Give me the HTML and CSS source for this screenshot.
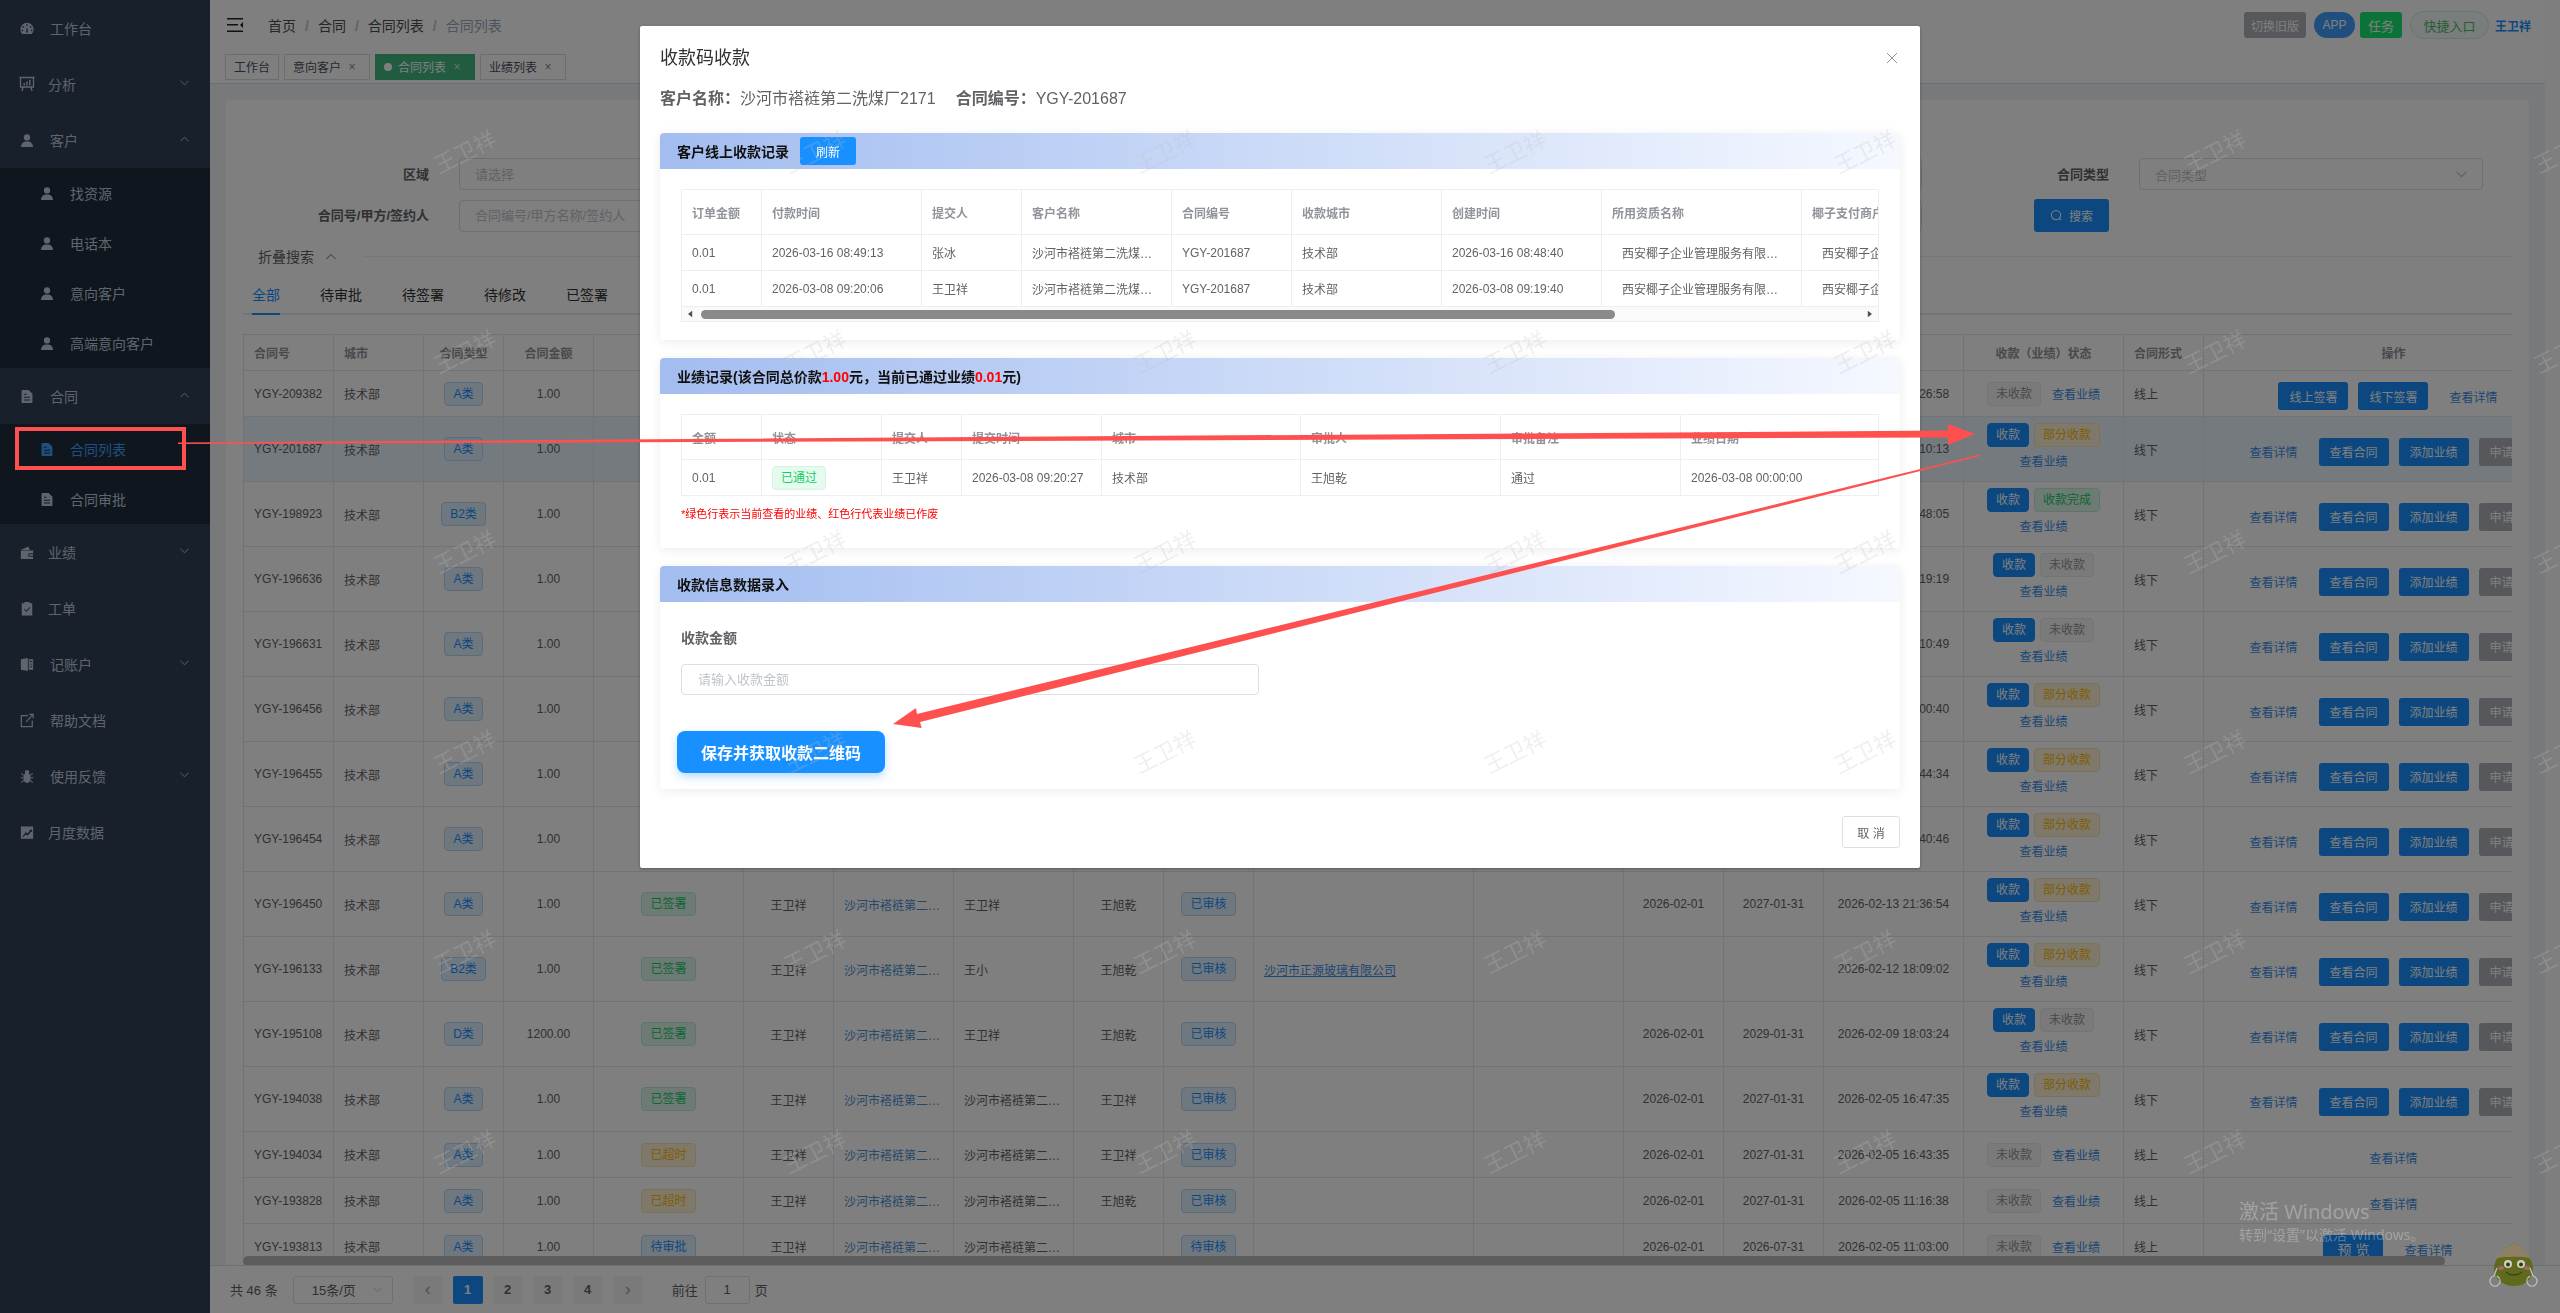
FILE: index.html
```html
<!DOCTYPE html>
<html lang="zh-CN">
<head>
    <meta charset="UTF-8">
    <meta name="viewport" content="width=device-width, initial-scale=1.0">
    <title>合同列表</title>
    <link rel="stylesheet" href="styles.css">
</head>
<body>
    <svg class="icon-defs" aria-hidden="true">
        <symbol id="i-gauge" viewBox="0 0 16 16"><path fill-rule="evenodd" d="M8 1.500a7.500 7.500 0 0 0-7.500 7.500c0 2 .8 3.900 2.100 5.200h10.800A7.400 7.400 0 0 0 15.500 9 7.500 7.500 0 0 0 8 1.500zM8 3.200a1 1 0 1 1 0 2 1 1 0 0 1 0-2zM3.800 5a1 1 0 1 1 0 2 1 1 0 0 1 0-2zM12.200 5a1 1 0 1 1 0 2 1 1 0 0 1 0-2zM2.700 9a1 1 0 1 1 0 2 1 1 0 0 1 0-2zM13.300 9a1 1 0 1 1 0 2 1 1 0 0 1 0-2zM7 12.500l.5-5h1l.5 5z"/></symbol>
        <symbol id="i-board" viewBox="0 0 16 16"><path fill="none" stroke="currentColor" stroke-width="1.300" d="M.5 1.500h15M1.500 1.500v9.500h13V1.500M4 11l-1 4M12 11l1 4"/><path d="M4.500 7h1.400v2.500H4.500zM7.300 5.500h1.400v4H7.300zM10.100 3.800h1.400v5.700h-1.400z"/></symbol>
        <symbol id="i-user" viewBox="0 0 16 16"><circle cx="8" cy="4.500" r="3.600"/><path d="M1.200 15.500c0-4.200 2.400-6.500 6.800-6.500s6.800 2.300 6.800 6.500z"/></symbol>
        <symbol id="i-doc" viewBox="0 0 16 16"><path fill-rule="evenodd" d="M2.800.5h7l4.400 4.400v9.600c0 .6-.4 1-1 1H2.800c-.6 0-1-.4-1-1V1.500c0-.6.4-1 1-1zM4.500 4.800v1.200h3V4.800zM4.500 8.200v1.200h7V8.200zM4.500 11.300v1.200h7v-1.200z"/></symbol>
        <symbol id="i-wallet" viewBox="0 0 16 16"><path fill-rule="evenodd" d="M1 5l8.500-4 1.700 4zM1 5.800h14v3h-4a2 2 0 0 0 0 4h4v2.700H1zM11 10h4v1.800h-4a.9.9 0 0 1 0-1.800z"/></symbol>
        <symbol id="i-clip" viewBox="0 0 16 16"><path fill-rule="evenodd" d="M2 2h3V.5h6V2h3v14H2zM4.500 9l3 3 4.200-5-.8-.7-3.500 4.200-2.200-2.200z"/></symbol>
        <symbol id="i-book" viewBox="0 0 16 16"><path fill-rule="evenodd" d="M1 2l8-1.500v15L1 14zM10 2h5v12h-5zM11 4v1h3V4zM11 7v1h3V7zM11 10v1h3v-1z"/></symbol>
        <symbol id="i-link" viewBox="0 0 16 16"><path fill="none" stroke="currentColor" stroke-width="1.400" d="M9 2.500H1.500v12.500h12.500V8M7 9.500L14.500 1.500M10.500 1h4.500v4.500"/></symbol>
        <symbol id="i-bug" viewBox="0 0 16 16"><ellipse cx="8" cy="9.500" rx="4.200" ry="5.800"/><circle cx="8" cy="3" r="2.400"/><path fill="none" stroke="currentColor" stroke-width="1.200" d="M1.500 4.500l2.700 2.200M14.500 4.500l-2.700 2.200M.7 9.500h3M15.300 9.500h-3M1.500 15l2.700-2.600M14.500 15l-2.700-2.600"/></symbol>
        <symbol id="i-chart" viewBox="0 0 16 16"><path fill-rule="evenodd" d="M1 1h14v14H1zM3 12.300l.8.7 3-3 2 1.800 4-5 1 .8V4.500l-3.400.6.900.6-2.700 3.400-2-1.800z"/></symbol>
        <symbol id="i-down" viewBox="0 0 10 6"><path fill="none" stroke="currentColor" stroke-width="1" d="M.5.500L5 5l4.500-4.500"/></symbol>
        <symbol id="i-up" viewBox="0 0 10 6"><path fill="none" stroke="currentColor" stroke-width="1" d="M.5 5.500L5 1l4.500 4.500"/></symbol>
    </svg>

    <div class="app">
        <aside class="sidebar">
            <a class="menu-item"><svg class="menu-icon"><use href="#i-gauge"/></svg><span class="menu-text">工作台</span></a>
            <a class="menu-item"><svg class="menu-icon menu-icon-wide"><use href="#i-board"/></svg><span class="menu-text menu-text-near">分析</span><svg class="menu-arrow"><use href="#i-down"/></svg></a>
            <a class="menu-item"><svg class="menu-icon"><use href="#i-user"/></svg><span class="menu-text">客户</span><svg class="menu-arrow"><use href="#i-up"/></svg></a>
            <div class="submenu">
                <a class="sub-item"><svg class="menu-icon"><use href="#i-user"/></svg><span class="menu-text">找资源</span></a>
                <a class="sub-item"><svg class="menu-icon"><use href="#i-user"/></svg><span class="menu-text">电话本</span></a>
                <a class="sub-item"><svg class="menu-icon"><use href="#i-user"/></svg><span class="menu-text">意向客户</span></a>
                <a class="sub-item"><svg class="menu-icon"><use href="#i-user"/></svg><span class="menu-text">高端意向客户</span></a>
            </div>
            <a class="menu-item"><svg class="menu-icon"><use href="#i-doc"/></svg><span class="menu-text">合同</span><svg class="menu-arrow"><use href="#i-up"/></svg></a>
            <div class="submenu">
                <a class="sub-item sub-item-active"><svg class="menu-icon"><use href="#i-doc"/></svg><span class="menu-text">合同列表</span></a>
                <a class="sub-item"><svg class="menu-icon"><use href="#i-doc"/></svg><span class="menu-text">合同审批</span></a>
            </div>
            <a class="menu-item"><svg class="menu-icon"><use href="#i-wallet"/></svg><span class="menu-text menu-text-near">业绩</span><svg class="menu-arrow"><use href="#i-down"/></svg></a>
            <a class="menu-item"><svg class="menu-icon"><use href="#i-clip"/></svg><span class="menu-text menu-text-near">工单</span></a>
            <a class="menu-item"><svg class="menu-icon"><use href="#i-book"/></svg><span class="menu-text">记账户</span><svg class="menu-arrow"><use href="#i-down"/></svg></a>
            <a class="menu-item"><svg class="menu-icon"><use href="#i-link"/></svg><span class="menu-text">帮助文档</span></a>
            <a class="menu-item"><svg class="menu-icon"><use href="#i-bug"/></svg><span class="menu-text">使用反馈</span><svg class="menu-arrow"><use href="#i-down"/></svg></a>
            <a class="menu-item"><svg class="menu-icon"><use href="#i-chart"/></svg><span class="menu-text menu-text-near">月度数据</span></a>
        </aside>

        <div class="main">
            <div class="main-top">
                <div class="main-body">
                    <header class="navbar">
                        <svg class="hamburger" viewBox="0 0 16 14"><path d="M0 0h16v1.500H0zM0 6h11v1.500H0zM0 12.500h16V14H0zM16 4v6l-3-3z"/></svg>
                        <nav class="breadcrumb">
                            <span>首页</span><i>/</i><span>合同</span><i>/</i><span>合同列表</span><i>/</i><span class="crumb-last">合同列表</span>
                        </nav>
                        <div class="nav-right">
                            <span class="nav-btn nav-btn-gray">切换旧版</span>
                            <span class="nav-btn nav-btn-app">APP</span>
                            <span class="nav-btn nav-btn-task">任务</span>
                            <span class="nav-btn nav-btn-quick">快捷入口</span>
                            <span class="nav-user">王卫祥</span>
                        </div>
                    </header>

                    <div class="tagsbar">
                        <span class="view-tag">工作台</span>
                        <span class="view-tag">意向客户<b>×</b></span>
                        <span class="view-tag view-tag-active"><em></em>合同列表<b>×</b></span>
                        <span class="view-tag">业绩列表<b>×</b></span>
                    </div>

                    <div class="content">
                        <section class="card">
                            <form class="search-form">
                                <label>区域</label>
                                <input class="field" placeholder="请选择">
                                <label>合同类型</label>
                                <div class="field field-select"><span>合同类型</span><svg class="select-arrow"><use href="#i-down"/></svg></div>
                                <label>合同号/甲方/签约人</label>
                                <input class="field" placeholder="合同编号/甲方名称/签约人">
                                <button type="button" class="search-btn"><svg viewBox="0 0 14 14"><circle cx="6.500" cy="6.500" r="5" fill="none" stroke="currentColor" stroke-width="1.100"/><path d="M10 10l2 2" stroke="currentColor" stroke-width="1.100"/></svg>搜索</button>
                            </form>

                            <div class="fold-row">
                                <span>折叠搜索</span><svg class="fold-arrow"><use href="#i-up"/></svg><hr>
                            </div>

                            <div class="tabs">
                                <span class="tab tab-active">全部</span>
                                <span class="tab">待审批</span>
                                <span class="tab">待签署</span>
                                <span class="tab">待修改</span>
                                <span class="tab">已签署</span>
                            </div>

                            <div class="table-wrap">
                                <table class="list-table">
                                    <colgroup>
                                        <col class="w90"><col class="w90"><col class="w80"><col class="w90"><col class="w150"><col class="w90"><col class="w120"><col class="w120"><col class="w90"><col class="w90"><col class="w220"><col class="w150"><col class="w100"><col class="w100"><col class="w140"><col class="w160"><col class="w80"><col class="w380">
                                    </colgroup>
                                    <thead>
                                        <!-- 中间几列的表头被弹窗盖住 -->
                                        <tr>
                                            <th>合同号</th><th>城市</th><th class="c">合同类型</th><th class="c">合同金额</th><th></th><th></th><th></th><th></th><th></th><th></th><th></th><th></th><th></th><th></th><th></th><th class="c">收款（业绩）状态</th><th>合同形式</th><th class="c">操作</th>
                                        </tr>
                                    </thead>
                                    <tbody>
                                        <tr class="row-low">
                                            <td>YGY-209382</td><td>技术部</td><td class="c"><span class="tag tag-blue">A类</span></td><td class="c">1.00</td><td></td><td></td><td></td><td></td><td></td><td></td><td></td><td></td><td></td><td></td><td class="c">2026-03-16 10:26:58</td>
                                            <td class="c"><div class="pay-line"><span class="tag tag-gray">未收款</span><a class="link">查看业绩</a></div></td><td>线上</td>
                                            <td class="cell-ops"><div class="ops"><button class="btn">线上签署</button><button class="btn">线下签署</button><a class="link">查看详情</a></div></td>
                                        </tr>
                                        <tr class="row-tall row-current">
                                            <td>YGY-201687</td><td>技术部</td><td class="c"><span class="tag tag-blue">A类</span></td><td class="c">1.00</td><td></td><td></td><td></td><td></td><td></td><td></td><td></td><td></td><td></td><td></td><td class="c">2026-03-08 09:10:13</td>
                                            <td class="c"><div class="pay-stack"><div class="pay-tags"><span class="tag tag-fill">收款</span><span class="tag tag-amber">部分收款</span></div><a class="link">查看业绩</a></div></td><td>线下</td>
                                            <td class="cell-ops"><div class="ops"><a class="link">查看详情</a><button class="btn">查看合同</button><button class="btn">添加业绩</button><button class="btn btn-gray">申请开票</button></div></td>
                                        </tr>
                                        <tr class="row-tall">
                                            <td>YGY-198923</td><td>技术部</td><td class="c"><span class="tag tag-blue">B2类</span></td><td class="c">1.00</td><td></td><td></td><td></td><td></td><td></td><td></td><td></td><td></td><td></td><td></td><td class="c">2026-03-02 16:48:05</td>
                                            <td class="c"><div class="pay-stack"><div class="pay-tags"><span class="tag tag-fill">收款</span><span class="tag tag-green">收款完成</span></div><a class="link">查看业绩</a></div></td><td>线下</td>
                                            <td class="cell-ops"><div class="ops"><a class="link">查看详情</a><button class="btn">查看合同</button><button class="btn">添加业绩</button><button class="btn btn-gray">申请开票</button></div></td>
                                        </tr>
                                        <tr class="row-tall">
                                            <td>YGY-196636</td><td>技术部</td><td class="c"><span class="tag tag-blue">A类</span></td><td class="c">1.00</td><td></td><td></td><td></td><td></td><td></td><td></td><td></td><td></td><td></td><td></td><td class="c">2026-02-14 09:19:19</td>
                                            <td class="c"><div class="pay-stack"><div class="pay-tags"><span class="tag tag-fill">收款</span><span class="tag tag-gray">未收款</span></div><a class="link">查看业绩</a></div></td><td>线下</td>
                                            <td class="cell-ops"><div class="ops"><a class="link">查看详情</a><button class="btn">查看合同</button><button class="btn">添加业绩</button><button class="btn btn-gray">申请开票</button></div></td>
                                        </tr>
                                        <tr class="row-tall">
                                            <td>YGY-196631</td><td>技术部</td><td class="c"><span class="tag tag-blue">A类</span></td><td class="c">1.00</td><td></td><td></td><td></td><td></td><td></td><td></td><td></td><td></td><td></td><td></td><td class="c">2026-02-14 09:10:49</td>
                                            <td class="c"><div class="pay-stack"><div class="pay-tags"><span class="tag tag-fill">收款</span><span class="tag tag-gray">未收款</span></div><a class="link">查看业绩</a></div></td><td>线下</td>
                                            <td class="cell-ops"><div class="ops"><a class="link">查看详情</a><button class="btn">查看合同</button><button class="btn">添加业绩</button><button class="btn btn-gray">申请开票</button></div></td>
                                        </tr>
                                        <tr class="row-tall">
                                            <td>YGY-196456</td><td>技术部</td><td class="c"><span class="tag tag-blue">A类</span></td><td class="c">1.00</td><td></td><td></td><td></td><td></td><td></td><td></td><td></td><td></td><td></td><td></td><td class="c">2026-02-13 22:00:40</td>
                                            <td class="c"><div class="pay-stack"><div class="pay-tags"><span class="tag tag-fill">收款</span><span class="tag tag-amber">部分收款</span></div><a class="link">查看业绩</a></div></td><td>线下</td>
                                            <td class="cell-ops"><div class="ops"><a class="link">查看详情</a><button class="btn">查看合同</button><button class="btn">添加业绩</button><button class="btn btn-gray">申请开票</button></div></td>
                                        </tr>
                                        <tr class="row-tall">
                                            <td>YGY-196455</td><td>技术部</td><td class="c"><span class="tag tag-blue">A类</span></td><td class="c">1.00</td><td></td><td></td><td></td><td></td><td></td><td></td><td></td><td></td><td></td><td></td><td class="c">2026-02-13 21:44:34</td>
                                            <td class="c"><div class="pay-stack"><div class="pay-tags"><span class="tag tag-fill">收款</span><span class="tag tag-amber">部分收款</span></div><a class="link">查看业绩</a></div></td><td>线下</td>
                                            <td class="cell-ops"><div class="ops"><a class="link">查看详情</a><button class="btn">查看合同</button><button class="btn">添加业绩</button><button class="btn btn-gray">申请开票</button></div></td>
                                        </tr>
                                        <tr class="row-tall">
                                            <td>YGY-196454</td><td>技术部</td><td class="c"><span class="tag tag-blue">A类</span></td><td class="c">1.00</td><td></td><td></td><td></td><td></td><td></td><td></td><td></td><td></td><td></td><td></td><td class="c">2026-02-13 21:40:46</td>
                                            <td class="c"><div class="pay-stack"><div class="pay-tags"><span class="tag tag-fill">收款</span><span class="tag tag-amber">部分收款</span></div><a class="link">查看业绩</a></div></td><td>线下</td>
                                            <td class="cell-ops"><div class="ops"><a class="link">查看详情</a><button class="btn">查看合同</button><button class="btn">添加业绩</button><button class="btn btn-gray">申请开票</button></div></td>
                                        </tr>
                                        <tr class="row-tall">
                                            <td>YGY-196450</td><td>技术部</td><td class="c"><span class="tag tag-blue">A类</span></td><td class="c">1.00</td><td class="c"><span class="tag tag-green">已签署</span></td><td class="c">王卫祥</td><td class="cut link-name">沙河市褡裢第二洗煤厂</td><td class="cut">王卫祥</td><td class="c">王旭乾</td><td class="c"><span class="tag tag-blue">已审核</span></td><td></td><td></td><td class="c">2026-02-01</td><td class="c">2027-01-31</td><td class="c">2026-02-13 21:36:54</td>
                                            <td class="c"><div class="pay-stack"><div class="pay-tags"><span class="tag tag-fill">收款</span><span class="tag tag-amber">部分收款</span></div><a class="link">查看业绩</a></div></td><td>线下</td>
                                            <td class="cell-ops"><div class="ops"><a class="link">查看详情</a><button class="btn">查看合同</button><button class="btn">添加业绩</button><button class="btn btn-gray">申请开票</button></div></td>
                                        </tr>
                                        <tr class="row-tall">
                                            <td>YGY-196133</td><td>技术部</td><td class="c"><span class="tag tag-blue">B2类</span></td><td class="c">1.00</td><td class="c"><span class="tag tag-green">已签署</span></td><td class="c">王卫祥</td><td class="cut link-name">沙河市褡裢第二洗煤厂</td><td class="cut">王小</td><td class="c">王旭乾</td><td class="c"><span class="tag tag-blue">已审核</span></td><td><a class="link link-under">沙河市正源玻璃有限公司</a></td><td></td><td class="c"></td><td class="c"></td><td class="c">2026-02-12 18:09:02</td>
                                            <td class="c"><div class="pay-stack"><div class="pay-tags"><span class="tag tag-fill">收款</span><span class="tag tag-amber">部分收款</span></div><a class="link">查看业绩</a></div></td><td>线下</td>
                                            <td class="cell-ops"><div class="ops"><a class="link">查看详情</a><button class="btn">查看合同</button><button class="btn">添加业绩</button><button class="btn btn-gray">申请开票</button></div></td>
                                        </tr>
                                        <tr class="row-tall">
                                            <td>YGY-195108</td><td>技术部</td><td class="c"><span class="tag tag-blue">D类</span></td><td class="c">1200.00</td><td class="c"><span class="tag tag-green">已签署</span></td><td class="c">王卫祥</td><td class="cut link-name">沙河市褡裢第二洗煤厂</td><td class="cut">王卫祥</td><td class="c">王旭乾</td><td class="c"><span class="tag tag-blue">已审核</span></td><td></td><td></td><td class="c">2026-02-01</td><td class="c">2029-01-31</td><td class="c">2026-02-09 18:03:24</td>
                                            <td class="c"><div class="pay-stack"><div class="pay-tags"><span class="tag tag-fill">收款</span><span class="tag tag-gray">未收款</span></div><a class="link">查看业绩</a></div></td><td>线下</td>
                                            <td class="cell-ops"><div class="ops"><a class="link">查看详情</a><button class="btn">查看合同</button><button class="btn">添加业绩</button><button class="btn btn-gray">申请开票</button></div></td>
                                        </tr>
                                        <tr class="row-tall">
                                            <td>YGY-194038</td><td>技术部</td><td class="c"><span class="tag tag-blue">A类</span></td><td class="c">1.00</td><td class="c"><span class="tag tag-green">已签署</span></td><td class="c">王卫祥</td><td class="cut link-name">沙河市褡裢第二洗煤厂</td><td class="cut">沙河市褡裢第二洗煤厂</td><td class="c">王卫祥</td><td class="c"><span class="tag tag-blue">已审核</span></td><td></td><td></td><td class="c">2026-02-01</td><td class="c">2027-01-31</td><td class="c">2026-02-05 16:47:35</td>
                                            <td class="c"><div class="pay-stack"><div class="pay-tags"><span class="tag tag-fill">收款</span><span class="tag tag-amber">部分收款</span></div><a class="link">查看业绩</a></div></td><td>线下</td>
                                            <td class="cell-ops"><div class="ops"><a class="link">查看详情</a><button class="btn">查看合同</button><button class="btn">添加业绩</button><button class="btn btn-gray">申请开票</button></div></td>
                                        </tr>
                                        <tr class="row-low">
                                            <td>YGY-194034</td><td>技术部</td><td class="c"><span class="tag tag-blue">A类</span></td><td class="c">1.00</td><td class="c"><span class="tag tag-amber">已超时</span></td><td class="c">王卫祥</td><td class="cut link-name">沙河市褡裢第二洗煤厂</td><td class="cut">沙河市褡裢第二洗煤厂</td><td class="c">王卫祥</td><td class="c"><span class="tag tag-blue">已审核</span></td><td></td><td></td><td class="c">2026-02-01</td><td class="c">2027-01-31</td><td class="c">2026-02-05 16:43:35</td>
                                            <td class="c"><div class="pay-line"><span class="tag tag-gray">未收款</span><a class="link">查看业绩</a></div></td><td>线上</td>
                                            <td class="cell-ops"><div class="ops"><a class="link">查看详情</a></div></td>
                                        </tr>
                                        <tr class="row-low">
                                            <td>YGY-193828</td><td>技术部</td><td class="c"><span class="tag tag-blue">A类</span></td><td class="c">1.00</td><td class="c"><span class="tag tag-amber">已超时</span></td><td class="c">王卫祥</td><td class="cut link-name">沙河市褡裢第二洗煤厂</td><td class="cut">沙河市褡裢第二洗煤厂</td><td class="c">王旭乾</td><td class="c"><span class="tag tag-blue">已审核</span></td><td></td><td></td><td class="c">2026-02-01</td><td class="c">2027-01-31</td><td class="c">2026-02-05 11:16:38</td>
                                            <td class="c"><div class="pay-line"><span class="tag tag-gray">未收款</span><a class="link">查看业绩</a></div></td><td>线上</td>
                                            <td class="cell-ops"><div class="ops"><a class="link">查看详情</a></div></td>
                                        </tr>
                                        <tr class="row-low">
                                            <td>YGY-193813</td><td>技术部</td><td class="c"><span class="tag tag-blue">A类</span></td><td class="c">1.00</td><td class="c"><span class="tag tag-blue">待审批</span></td><td class="c">王卫祥</td><td class="cut link-name">沙河市褡裢第二洗煤厂</td><td class="cut">沙河市褡裢第二洗煤厂</td><td class="c"></td><td class="c"><span class="tag tag-blue">待审核</span></td><td></td><td></td><td class="c">2026-02-01</td><td class="c">2026-07-31</td><td class="c">2026-02-05 11:03:00</td>
                                            <td class="c"><div class="pay-line"><span class="tag tag-gray">未收款</span><a class="link">查看业绩</a></div></td><td>线上</td>
                                            <td class="cell-ops"><div class="ops"><button class="btn btn-preview">预 览</button><a class="link">查看详情</a></div></td>
                                        </tr>
                                    </tbody>
                                </table>
                                <div class="table-thumb"></div>
                            </div>
                        </section>
                    </div>
                </div>
                <div class="page-track"></div>
            </div>

            <footer class="pager">
                <span class="pager-total">共 46 条</span>
                <div class="pager-size"><span>15条/页</span><svg><use href="#i-down"/></svg></div>
                <span class="page-btn page-arrow">‹</span>
                <span class="page-btn page-now">1</span>
                <span class="page-btn">2</span>
                <span class="page-btn">3</span>
                <span class="page-btn">4</span>
                <span class="page-btn page-arrow">›</span>
                <span class="pager-jump">前往</span>
                <span class="pager-input">1</span>
                <span>页</span>
            </footer>
        </div>
    </div>

    <div class="mask"></div>

    <svg class="mascot" viewBox="0 0 70 60">
        <path fill="#5f6a1c" d="M34 8C25 12 14 24 14 33c0 11 9 18 20 18s19-7 19-18c0-9-11-21-19-25z"/>
        <path fill="#8f8065" d="M34 8c-8 4-15 11-18.500 16 6-3 13-1.500 18-2.500 5 1 12-.5 18 2.500C47 18 42 12 34 8z"/>
        <circle cx="28" cy="29" r="4" fill="#cfcfc4"/><circle cx="41" cy="29" r="4" fill="#cfcfc4"/>
        <circle cx="28" cy="29.500" r="2" fill="#33361a"/><circle cx="41" cy="29.500" r="2" fill="#33361a"/>
        <ellipse cx="21" cy="33" rx="3" ry="2" fill="#a0656a"/><ellipse cx="47" cy="33" rx="3" ry="2" fill="#a0656a"/>
        <path fill="none" stroke="#2e3312" stroke-width="1" d="M26 37c4 4 11 4 16 0"/>
        <path fill="none" stroke="#c4c4c0" stroke-width="1.200" d="M17 33l-3 8c-4 1-5 5-3 8s6 3 8 0 1-6-2-8M50 33l3 8c4 1 5 5 3 8s-6 3-8 0-1-6 2-8"/>
    </svg>

    <div class="modal">
        <div class="modal-head">
            <span class="modal-title">收款码收款</span>
            <svg class="modal-close" viewBox="0 0 12 12"><path d="M1 1l10 10M11 1L1 11" stroke="currentColor" fill="none"/></svg>
        </div>
        <div class="modal-body">
            <p class="customer-line"><b>客户名称：</b>沙河市褡裢第二洗煤厂2171<b class="customer-no">合同编号：</b>YGY-201687</p>

            <section class="panel">
                <div class="panel-head"><span>客户线上收款记录</span><button class="refresh-btn">刷新</button></div>
                <div class="panel-body">
                    <div class="pay-table-wrap">
                        <table class="sub-table sub-table-wide">
                            <colgroup><col class="w80"><col class="w160"><col class="w100"><col class="w150"><col class="w120"><col class="w150"><col class="w160"><col class="w200"><col class="w200"></colgroup>
                            <thead>
                                <tr><th>订单金额</th><th>付款时间</th><th>提交人</th><th>客户名称</th><th>合同编号</th><th>收款城市</th><th>创建时间</th><th>所用资质名称</th><th>椰子支付商户号</th></tr>
                            </thead>
                            <tbody>
                                <tr><td>0.01</td><td>2026-03-16 08:49:13</td><td>张冰</td><td class="cut-name">沙河市褡裢第二洗煤厂2171</td><td>YGY-201687</td><td>技术部</td><td>2026-03-16 08:48:40</td><td class="cut-corp">西安椰子企业管理服务有限公司</td><td class="cut-corp">西安椰子企业管理服务有限公司</td></tr>
                                <tr><td>0.01</td><td>2026-03-08 09:20:06</td><td>王卫祥</td><td class="cut-name">沙河市褡裢第二洗煤厂2171</td><td>YGY-201687</td><td>技术部</td><td>2026-03-08 09:19:40</td><td class="cut-corp">西安椰子企业管理服务有限公司</td><td class="cut-corp">西安椰子企业管理服务有限公司</td></tr>
                            </tbody>
                        </table>
                        <div class="sub-scroll">
                            <svg viewBox="0 0 6 8"><path d="M5 0v8L0 4z"/></svg>
                            <div class="sub-thumb"></div>
                            <svg viewBox="0 0 6 8"><path d="M1 0v8l5-4z"/></svg>
                        </div>
                    </div>
                </div>
            </section>

            <section class="panel">
                <div class="panel-head"><span>业绩记录(该合同总价款<em>1.00</em>元，当前已通过业绩<em>0.01</em>元)</span></div>
                <div class="panel-body panel-body-note">
                    <div class="pay-table-wrap">
                        <table class="sub-table sub-table-fit">
                            <colgroup><col class="w80"><col class="w120"><col class="w80"><col class="w140"><col class="w199"><col class="w200"><col class="w180"><col class="w200"></colgroup>
                            <thead>
                                <tr><th>金额</th><th>状态</th><th>提交人</th><th>提交时间</th><th>城市</th><th>审批人</th><th>审批备注</th><th>业绩日期</th></tr>
                            </thead>
                            <tbody>
                                <tr><td>0.01</td><td><span class="tag tag-pass">已通过</span></td><td>王卫祥</td><td>2026-03-08 09:20:27</td><td>技术部</td><td>王旭乾</td><td>通过</td><td>2026-03-08 00:00:00</td></tr>
                            </tbody>
                        </table>
                    </div>
                    <p class="table-note">*绿色行表示当前查看的业绩、红色行代表业绩已作废</p>
                </div>
            </section>

            <section class="panel">
                <div class="panel-head"><span>收款信息数据录入</span></div>
                <div class="panel-body panel-form">
                    <label class="amount-label">收款金额</label>
                    <input class="amount-input" placeholder="请输入收款金额">
                    <button class="save-btn">保存并获取收款二维码</button>
                </div>
            </section>
        </div>
        <div class="modal-foot"><button class="cancel-btn">取 消</button></div>
    </div>

    <svg class="watermark">
        <defs>
            <pattern id="wm" width="350" height="200" patternUnits="userSpaceOnUse">
                <text x="175" y="108" text-anchor="middle" transform="rotate(-27 175 100)">王卫祥</text>
            </pattern>
        </defs>
        <rect width="100%" height="100%" fill="url(#wm)"/>
    </svg>

    <!-- 截图上的红色标注 -->
    <svg class="annotate">
        <rect x="17" y="429" width="167" height="39"/>
        <polygon points="178,442.600 1948,430.500 1948,424 1975,434 1948,445 1948,437.500 178,444"/>
        <polygon points="1980,454.500 917,714 916,708 893,724 921.600,728 920,722 1980,456"/>
    </svg>

    <div class="win-activate">
        <p>激活 Windows</p>
        <small>转到“设置”以激活 Windows。</small>
    </div>
</body>
</html>
```

FILE: styles.css
```css
* {
    box-sizing: border-box;
}
html, body {
    margin: 0;
    height: 100%;
    overflow: hidden;
}
body {
    font-family: "Liberation Sans", "Noto Sans CJK SC", sans-serif;
    font-size: 14px;
    color: #606266;
    background: #fff;
}
p {
    margin: 0;
}
button, input {
    font-family: inherit;
}
.icon-defs {
    display: none;
}
.app {
    display: flex;
    height: 1313px;
}

/* 左侧菜单 */
.sidebar {
    width: 210px;
    flex: none;
    background: #304156;
    color: #bfcbd9;
}
.menu-item, .sub-item {
    display: flex;
    align-items: center;
    height: 56px;
    padding-left: 20px;
    position: relative;
}
.sub-item {
    height: 50px;
    padding-left: 40px;
}
.submenu {
    background: #1f2d3d;
}
.sub-item-active {
    color: #409eff;
}
.menu-icon {
    width: 14px;
    height: 15px;
    fill: currentColor;
    flex: none;
}
.menu-icon-wide {
    width: 16px;
    height: 16px;
    margin-left: -1px;
}
.menu-text {
    margin-left: 16px;
}
.menu-text-near {
    margin-left: 14px;
}
.menu-icon-wide + .menu-text-near {
    margin-left: 13px;
}
.menu-arrow {
    position: absolute;
    right: 21px;
    top: 24px;
    width: 9px;
    height: 6px;
}

/* 主体 */
.main {
    flex: 1;
    min-width: 0;
    display: flex;
    flex-direction: column;
}
.main-top {
    flex: 1;
    min-height: 0;
    display: flex;
}
.main-body {
    flex: 1;
    min-width: 0;
    display: flex;
    flex-direction: column;
    background: #f0f2f5;
}
.page-track {
    width: 15px;
    flex: none;
    background: #fcfcfc;
}
.navbar {
    height: 50px;
    flex: none;
    display: flex;
    align-items: center;
    padding: 0 14px 0 17px;
    background: #fff;
    box-shadow: 0 1px 2px rgba(0, 0, 0, .04);
}
.hamburger {
    width: 16px;
    height: 14px;
    flex: none;
    fill: #222;
}
.breadcrumb {
    margin-left: 25px;
    color: #4a4c50;
}
.breadcrumb i {
    font-style: normal;
    font-weight: bold;
    color: #c0c4cc;
    margin: 0 9px;
}
.crumb-last {
    color: #97a8be;
}
.nav-right {
    margin-left: auto;
    display: flex;
    align-items: center;
    font-size: 12px;
}
.nav-btn {
    display: flex;
    align-items: center;
    justify-content: center;
    height: 26px;
}
.nav-btn-gray {
    width: 62px;
    background: #adb0b7;
    color: #fff;
    border-radius: 3px;
}
.nav-btn-app {
    width: 41px;
    margin-left: 8px;
    background: #409eff;
    color: #fff;
    border-radius: 13px;
}
.nav-btn-task {
    width: 42px;
    margin-left: 5px;
    background: #14e870;
    color: #fff;
    border-radius: 3px;
    font-size: 13px;
}
.nav-btn-quick {
    width: 79px;
    height: 28px;
    margin-left: 8px;
    color: #4cba72;
    background: #f3fbf6;
    border: 1px solid #cfeedd;
    border-radius: 14px;
    font-size: 13px;
}
.nav-user {
    margin-left: 6px;
    color: #1890ff;
    font-size: 12px;
    font-weight: bold;
}
.tagsbar {
    height: 34px;
    flex: none;
    display: flex;
    align-items: center;
    gap: 5px;
    padding: 0 15px;
    background: #fff;
    border-bottom: 1px solid #d8dce5;
}
.view-tag {
    display: flex;
    align-items: center;
    height: 26px;
    padding: 0 8px;
    font-size: 12px;
    color: #495060;
    border: 1px solid #d8dce5;
}
.view-tag b {
    width: 8px;
    margin: 0 5px 0 7px;
    text-align: center;
    font-weight: normal;
    font-size: 12px;
    opacity: .7;
}
.view-tag-active {
    background: #42b983;
    border-color: #42b983;
    color: #fff;
}
.view-tag-active em {
    width: 8px;
    height: 8px;
    margin-right: 6px;
    border-radius: 50%;
    background: #fff;
}
.content {
    flex: 1;
    min-height: 0;
    padding: 16px 16px 0;
    overflow: hidden;
}
.card {
    height: 100%;
    display: flex;
    flex-direction: column;
    padding: 58px 17px 0;
    background: #fff;
    border-radius: 4px 4px 0 0;
}

/* 搜索区 */
.search-form {
    flex: none;
    display: grid;
    grid-template-columns: 186px 1463px 157px 344px;
    column-gap: 30px;
    row-gap: 9px;
    align-items: center;
}
.search-form label {
    text-align: right;
    font-size: 13px;
    font-weight: bold;
    padding-bottom: 2px;
}
.field {
    height: 32px;
    padding: 0 15px;
    font-size: 13px;
    background: #fff;
    border: 1px solid #dcdfe6;
    border-radius: 4px;
    outline: 0;
}
.field::placeholder, .amount-input::placeholder {
    color: #c0c4cc;
}
.field-select {
    display: flex;
    align-items: center;
    justify-content: space-between;
    color: #c0c4cc;
}
.select-arrow {
    width: 11px;
    height: 7px;
    color: #c0c4cc;
}
.search-btn {
    justify-self: end;
    width: 75px;
    height: 33px;
    display: flex;
    align-items: center;
    justify-content: center;
    gap: 6px;
    font-size: 12px;
    color: #fff;
    background: #1890ff;
    border: 0;
    border-radius: 3px;
}
.search-btn svg {
    width: 13px;
    height: 13px;
}
.fold-row {
    flex: none;
    display: flex;
    align-items: center;
    height: 20px;
    margin-top: 14px;
    padding-left: 15px;
    font-size: 14px;
}
.fold-arrow {
    width: 10px;
    height: 7px;
    margin-left: 12px;
}
.fold-row hr {
    flex: 1;
    margin: 0 0 0 27px;
    border: 0;
    border-top: 1px solid #ebeef5;
}
.tabs {
    flex: none;
    display: flex;
    gap: 40px;
    height: 40px;
    margin-top: 9px;
    padding-left: 9px;
    border-bottom: 2px solid #e4e7ed;
    color: #303133;
}
.tab {
    position: relative;
    line-height: 40px;
}
.tab-active {
    color: #1890ff;
}
.tab-active::after {
    content: "";
    position: absolute;
    left: 0;
    right: 0;
    bottom: -2px;
    height: 2px;
    background: #1890ff;
}

/* 合同表格 */
.table-wrap {
    position: relative;
    flex: 1;
    min-height: 0;
    margin-top: 19px;
    overflow: hidden;
}
.list-table, .sub-table {
    table-layout: fixed;
    border-collapse: separate;
    border-spacing: 0;
    font-size: 12px;
}
.list-table {
    width: 2340px;
    border-top: 1px solid #e4e7ed;
    border-left: 1px solid #e4e7ed;
}
.list-table th, .list-table td {
    padding: 0 10px;
    text-align: left;
    border-right: 1px solid #e4e7ed;
    border-bottom: 1px solid #e4e7ed;
}
.list-table th {
    height: 36px;
    color: #909399;
    font-weight: bold;
}
.list-table .c {
    text-align: center;
}
.w80 { width: 80px; }
.w90 { width: 90px; }
.w100 { width: 100px; }
.w120 { width: 120px; }
.w140 { width: 140px; }
.w150 { width: 150px; }
.w160 { width: 160px; }
.w180 { width: 180px; }
.w199 { width: 199px; }
.w200 { width: 200px; }
.w220 { width: 220px; }
.w380 { width: 380px; }
.row-low td {
    height: 46px;
}
.row-tall td {
    height: 65px;
}
.row-current td {
    background: #eaf4ff;
}
.list-table .cut {
    white-space: nowrap;
    overflow: hidden;
    text-overflow: ellipsis;
}
.link {
    color: #3a8ee6;
    white-space: nowrap;
}
.list-table .link-name {
    color: #4a90d0;
}
.link-under {
    text-decoration: underline;
}
.tag {
    display: inline-block;
    height: 24px;
    padding: 0 8px;
    line-height: 22px;
    font-size: 12px;
    white-space: nowrap;
    border: 1px solid;
    border-radius: 4px;
}
.tag-blue {
    color: #1890ff;
    background: #dfeeff;
    border-color: #b8d6f5;
}
.tag-green {
    color: #13ce66;
    background: #dcf5e8;
    border-color: #bdeccf;
}
.tag-pass {
    color: #13ce66;
    background: #e7faf0;
    border-color: #d0f5e0;
}
.tag-amber {
    color: #ffba00;
    background: #fdf3d6;
    border-color: #f5e3b0;
}
.tag-gray {
    color: #909399;
    background: #f4f4f5;
    border-color: #e9e9eb;
}
.tag-fill {
    color: #fff;
    background: #1890ff;
    border-color: #1890ff;
}
.list-table td:nth-child(16) {
    padding: 0;
}
.pay-line {
    display: flex;
    align-items: center;
    justify-content: center;
    gap: 11px;
}
.pay-stack {
    display: flex;
    flex-direction: column;
    align-items: center;
    gap: 5px;
    padding-bottom: 3px;
}
.pay-stack .link {
    line-height: 20px;
}
.pay-tags {
    display: flex;
    gap: 5px;
}
.list-table .cell-ops {
    padding: 5px 0 0;
}
.ops {
    display: flex;
    align-items: center;
    justify-content: center;
    gap: 10px;
}
.ops .link {
    margin: 0 11px;
}
.btn {
    width: 70px;
    height: 28px;
    padding: 0;
    font-size: 12px;
    color: #fff;
    background: #1890ff;
    border: 0;
    border-radius: 3px;
    flex: none;
}
.btn-gray {
    background: #adb0b7;
}
.btn-preview {
    width: 60px;
    font-size: 14px;
}
.table-thumb {
    position: absolute;
    left: 0;
    bottom: -1px;
    width: 2202px;
    height: 10px;
    background: #bababa;
    border-radius: 5px;
}

/* 分页 */
.pager {
    height: 48px;
    flex: none;
    display: flex;
    align-items: center;
    padding: 0 0 0 20px;
    font-size: 13px;
    background: #fff;
    border-top: 1px solid #dcdfe6;
    position: relative;
}
.pager-size {
    display: flex;
    align-items: center;
    justify-content: space-between;
    width: 100px;
    height: 28px;
    margin: 0 20px 0 15px;
    padding: 0 10px 0 18px;
    border: 1px solid #dcdfe6;
    border-radius: 3px;
}
.pager-size svg {
    width: 9px;
    height: 6px;
    color: #c0c4cc;
}
.page-btn {
    display: flex;
    align-items: center;
    justify-content: center;
    width: 30px;
    height: 28px;
    margin-right: 10px;
    font-weight: bold;
    background: #f4f4f5;
    border-radius: 2px;
}
.page-arrow {
    font-weight: normal;
    font-size: 18px;
    color: #a0a3a8;
}
.page-now {
    color: #fff;
    background: #1890ff;
}
.pager-jump {
    margin-left: 19px;
}
.pager-input {
    width: 45px;
    height: 28px;
    margin: 0 5px 0 7px;
    line-height: 26px;
    text-align: center;
    border: 1px solid #dcdfe6;
    border-radius: 3px;
}

/* 遮罩和弹窗 */
.mask {
    position: fixed;
    inset: 0;
    z-index: 10;
    background: rgba(0, 0, 0, .5);
}
.mascot {
    position: fixed;
    left: 2480px;
    top: 1235px;
    z-index: 11;
    width: 70px;
    height: 60px;
}
.modal {
    position: absolute;
    top: 26px;
    left: 50%;
    z-index: 12;
    width: 1280px;
    margin-left: -640px;
    background: #fff;
    border-radius: 2px;
    box-shadow: 0 1px 3px rgba(0, 0, 0, .3);
}
.modal-head {
    display: flex;
    align-items: center;
    justify-content: space-between;
    padding: 20px 22px 18px 20px;
}
.modal-title {
    font-size: 18px;
    line-height: 24px;
    color: #303133;
}
.modal-close {
    width: 12px;
    height: 12px;
    color: #909399;
}
.modal-body {
    padding: 0 20px;
}
.customer-line {
    font-size: 16px;
    line-height: 22px;
    margin-bottom: 23px;
    color: #606266;
}
.customer-line b {
    font-weight: bold;
}
.customer-no {
    margin-left: 20px;
}
.panel {
    margin-bottom: 18px;
    background: #fff;
    border-radius: 4px;
    box-shadow: 0 2px 12px rgba(0, 0, 0, .08);
}
.panel:last-child {
    margin-bottom: 0;
}
.panel-head {
    display: flex;
    align-items: center;
    height: 36px;
    padding-left: 17px;
    font-size: 14px;
    font-weight: bold;
    color: #111;
    background: linear-gradient(90deg, #a3bdf0, #f5f8ff);
    border-radius: 4px 4px 0 0;
}
.panel-head em {
    font-style: normal;
    color: #f00;
}
.refresh-btn {
    width: 56px;
    height: 28px;
    margin-left: 11px;
    font-size: 12px;
    color: #fff;
    background: #1890ff;
    border: 0;
    border-radius: 3px;
}
.panel-body {
    padding: 20px 21px 18px;
}
.panel-body-note {
    padding-bottom: 26px;
}
.pay-table-wrap {
    overflow: hidden;
    border: 1px solid #ebeef5;
    border-bottom: 0;
}
.sub-table-wide {
    width: 1320px;
}
.sub-table-fit {
    width: 100%;
}
.sub-table th, .sub-table td {
    padding: 0 10px;
    text-align: left;
    white-space: nowrap;
    overflow: hidden;
    border-right: 1px solid #ebeef5;
    border-bottom: 1px solid #ebeef5;
}
.sub-table th {
    height: 45px;
    color: #909399;
    font-weight: bold;
}
.sub-table td {
    height: 36px;
}
.sub-table th:last-child, .sub-table td:last-child {
    border-right: 0;
}
.sub-table .cut-name {
    padding-right: 7px;
    text-overflow: ellipsis;
}
.sub-table .cut-corp {
    padding: 0 19px 0 20px;
    text-overflow: ellipsis;
}
.sub-scroll {
    display: flex;
    align-items: center;
    height: 15px;
    padding: 0 6px;
    background: #fafafa;
    border-bottom: 1px solid #ebeef5;
}
.sub-scroll svg {
    width: 5px;
    height: 8px;
    flex: none;
    fill: #505050;
}
.sub-thumb {
    width: 914px;
    height: 9px;
    margin: 0 auto 0 8px;
    background: #8a8a8a;
    border-radius: 5px;
}
.table-note {
    margin-top: 10px;
    font-size: 11px;
    line-height: 16px;
    color: #f00;
}
.panel-form {
    display: flex;
    flex-direction: column;
    align-items: flex-start;
    padding: 26px 21px 16px;
}
.amount-label {
    font-size: 14px;
    line-height: 20px;
    font-weight: bold;
}
.amount-input {
    width: 578px;
    height: 31px;
    margin-top: 16px;
    padding: 0 16px;
    font-size: 13px;
    border: 1px solid #dcdfe6;
    border-radius: 4px;
    outline: 0;
}
.save-btn {
    width: 208px;
    height: 42px;
    margin: 36px 0 0 -4px;
    font-size: 16px;
    font-weight: bold;
    color: #fff;
    background: #1890ff;
    border: 0;
    border-radius: 8px;
    box-shadow: 0 4px 8px rgba(24, 144, 255, .3);
}
.modal-foot {
    display: flex;
    justify-content: flex-end;
    padding: 27px 20px 20px;
}
.cancel-btn {
    width: 58px;
    height: 32px;
    font-size: 12px;
    color: #606266;
    background: #fff;
    border: 1px solid #dcdfe6;
    border-radius: 3px;
}

/* 水印 */
.watermark {
    position: fixed;
    left: 290px;
    top: 52px;
    z-index: 13;
    width: 2270px;
    height: 1200px;
    pointer-events: none;
}
.watermark text {
    font-size: 22px;
    fill: rgba(190, 190, 190, .25);
}
.annotate {
    position: fixed;
    inset: 0;
    z-index: 14;
    width: 2560px;
    height: 1313px;
    pointer-events: none;
}
.annotate rect {
    fill: none;
    stroke: #ff5050;
    stroke-width: 4;
}
.annotate polygon {
    fill: #ff5050;
}
.win-activate {
    position: fixed;
    left: 2239px;
    top: 1199px;
    z-index: 15;
    color: rgba(255, 255, 255, .28);
    font-family: "Noto Sans", "Noto Sans CJK SC", sans-serif;
    pointer-events: none;
}
.win-activate p {
    font-size: 20px;
    line-height: 26px;
}
.win-activate small {
    display: block;
    font-size: 14px;
    line-height: 20px;
}
```
